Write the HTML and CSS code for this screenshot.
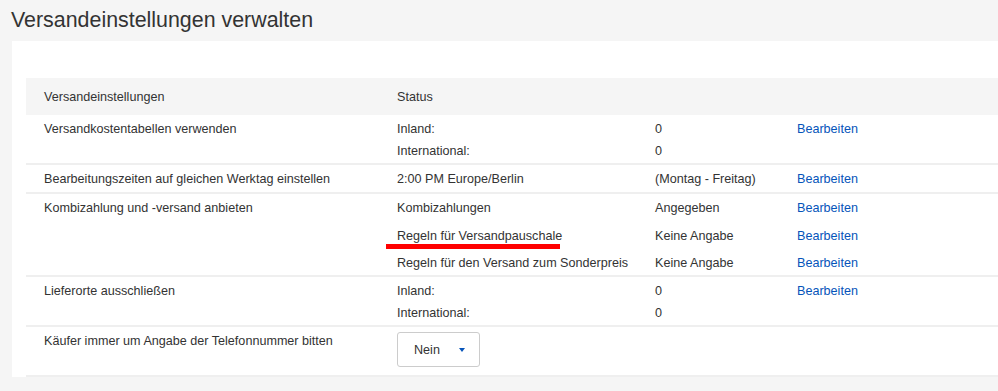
FILE: index.html
```
<!DOCTYPE html>
<html lang="de">
<head>
    <meta charset="UTF-8">
    <meta name="viewport" content="width=device-width, initial-scale=1.0">
    <title>Versandeinstellungen verwalten</title>
    <link rel="stylesheet" href="styles.css">
</head>
<body>
    <h1 class="page-title">Versandeinstellungen verwalten</h1>

    <div class="card">
        <div class="settings">
            <div class="row head">
                <span>Versandeinstellungen</span>
                <span>Status</span>
                <span></span>
                <span></span>
            </div>

            <div class="row">
                <span>Versandkostentabellen verwenden</span>
                <span>Inland:</span>
                <span>0</span>
                <a class="edit" href="#">Bearbeiten</a>
                <span></span>
                <span>International:</span>
                <span>0</span>
                <span></span>
            </div>

            <div class="row row-tight">
                <span>Bearbeitungszeiten auf gleichen Werktag einstellen</span>
                <span>2:00 PM Europe/Berlin</span>
                <span>(Montag - Freitag)</span>
                <a class="edit" href="#">Bearbeiten</a>
            </div>

            <div class="row row-spaced">
                <span>Kombizahlung und -versand anbieten</span>
                <span>Kombizahlungen</span>
                <span>Angegeben</span>
                <a class="edit" href="#">Bearbeiten</a>
                <span></span>
                <span class="marked">Regeln für Versandpauschale</span>
                <span>Keine Angabe</span>
                <a class="edit" href="#">Bearbeiten</a>
                <span></span>
                <span>Regeln für den Versand zum Sonderpreis</span>
                <span>Keine Angabe</span>
                <a class="edit" href="#">Bearbeiten</a>
            </div>

            <div class="row">
                <span>Lieferorte ausschließen</span>
                <span>Inland:</span>
                <span>0</span>
                <a class="edit" href="#">Bearbeiten</a>
                <span></span>
                <span>International:</span>
                <span>0</span>
                <span></span>
            </div>

            <div class="row row-last">
                <span>Käufer immer um Angabe der Telefonnummer bitten</span>
                <div class="select">
                    <span>Nein</span>
                    <i class="caret"></i>
                </div>
                <span></span>
                <span></span>
            </div>
        </div>
    </div>
</body>
</html>
```

FILE: styles.css
```
body {
  margin: 0;
  background: #f5f5f5;
  font-family: "Liberation Sans", Arial, sans-serif;
  color: #333;
  overflow: hidden;
}

.page-title {
  margin: 0;
  padding: 7px 0 8px 11px;
  font-size: 21.4px;
  line-height: 26px;
  font-weight: normal;
  color: #333;
}

.card {
  background: #fff;
  margin-left: 12px;
  padding: 37px 0 0 14px;
}

.settings {
  font-size: 12.6px;
  line-height: 22px;
}

.row {
  display: grid;
  grid-template-columns: 353px 258px 142px 1fr;
  padding: 3px 0 1px 18px;
  border-bottom: 2px solid #efefef;
}

.row.head {
  background: #f5f5f5;
  border-bottom: none;
  padding: 8px 0 7px 18px;
}

.row-tight {
  padding-bottom: 2px;
}

.row-spaced {
  row-gap: 5.5px;
}

.row-last {
  align-items: start;
  padding-bottom: 2px;
}

.edit {
  color: #0654ba;
  text-decoration: none;
}

/* red annotation under the item */
.marked {
  position: relative;
}

.marked::after {
  content: '';
  position: absolute;
  left: -11px;
  top: 19px;
  width: 174px;
  height: 5px;
  background: #f00;
}

.select {
  display: flex;
  align-items: center;
  box-sizing: border-box;
  width: 83px;
  height: 35px;
  margin: 2px 0 6px 0;
  padding-left: 16px;
  border: 1px solid #ccc;
  border-radius: 3px;
  background: #fff;
}

.select .caret {
  width: 0;
  height: 0;
  margin-left: 19px;
  margin-top: 1px;
  border-left: 3.5px solid transparent;
  border-right: 3.5px solid transparent;
  border-top: 4px solid #0654ba;
}
```
